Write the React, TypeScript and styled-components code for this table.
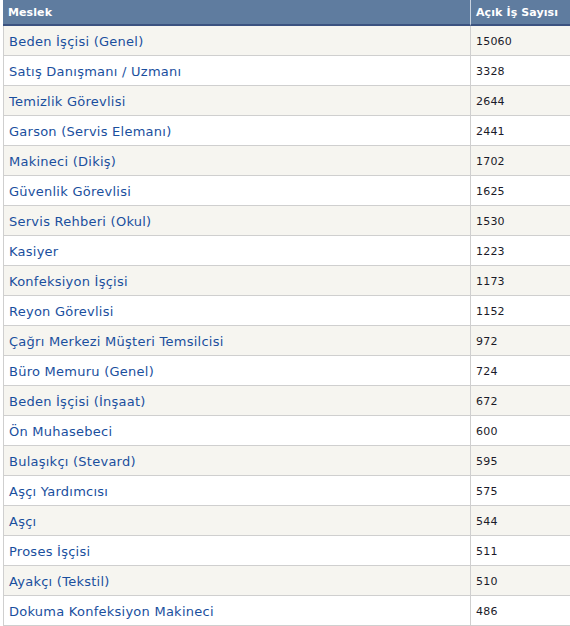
import React from "react";
import styled, { createGlobalStyle } from "styled-components";

const Global = createGlobalStyle`
  html, body { margin: 0; padding: 0; background: #ffffff; }
  body { font-family: "DejaVu Sans", Verdana, sans-serif; }
`;

const Table = styled.div`
  margin-left: 3px;
  width: 567px;
  display: grid;
  grid-template-columns: 467px 100px;
`;

const HeadCell = styled.div<{ $last?: boolean }>`
  height: 26px;
  box-sizing: border-box;
  background: #5f7c9f;
  border-bottom: 2px solid #3b5280;
  border-left: ${(p) => (p.$last ? "1px solid #c9d3e0" : "none")};
  color: #ffffff;
  font-weight: bold;
  font-size: 11px;
  letter-spacing: 0.1px;
  display: flex;
  align-items: center;
  padding-left: 5px;
  padding-top: 1px;
`;

const Cell = styled.div<{ $alt: boolean; $num?: boolean }>`
  height: 30px;
  box-sizing: border-box;
  background: ${(p) => (p.$alt ? "#f6f5f0" : "#ffffff")};
  border-bottom: 1px solid #cfcfcf;
  border-left: 1px solid #cfcfcf;
  display: flex;
  align-items: center;
  padding-left: 5px;
  padding-top: 1px;
  font-size: ${(p) => (p.$num ? "11px" : "13px")};
  letter-spacing: ${(p) => (p.$num ? "0.2px" : "0.25px")};
  color: ${(p) => (p.$num ? "#1a1a28" : "#1a4f9e")};
`;

const rows: [string, number][] = [
  ["Beden İşçisi (Genel)", 15060],
  ["Satış Danışmanı / Uzmanı", 3328],
  ["Temizlik Görevlisi", 2644],
  ["Garson (Servis Elemanı)", 2441],
  ["Makineci (Dikiş)", 1702],
  ["Güvenlik Görevlisi", 1625],
  ["Servis Rehberi (Okul)", 1530],
  ["Kasiyer", 1223],
  ["Konfeksiyon İşçisi", 1173],
  ["Reyon Görevlisi", 1152],
  ["Çağrı Merkezi Müşteri Temsilcisi", 972],
  ["Büro Memuru (Genel)", 724],
  ["Beden İşçisi (İnşaat)", 672],
  ["Ön Muhasebeci", 600],
  ["Bulaşıkçı (Stevard)", 595],
  ["Aşçı Yardımcısı", 575],
  ["Aşçı", 544],
  ["Proses İşçisi", 511],
  ["Ayakçı (Tekstil)", 510],
  ["Dokuma Konfeksiyon Makineci", 486],
];

export default function App() {
  return (
    <>
      <Global />
      <Table>
        <HeadCell>Meslek</HeadCell>
        <HeadCell $last>Açık İş Sayısı</HeadCell>
        {rows.map(([name, n], i) => (
          <React.Fragment key={name}>
            <Cell $alt={i % 2 === 0}>{name}</Cell>
            <Cell $alt={i % 2 === 0} $num>
              {n}
            </Cell>
          </React.Fragment>
        ))}
      </Table>
    </>
  );
}
